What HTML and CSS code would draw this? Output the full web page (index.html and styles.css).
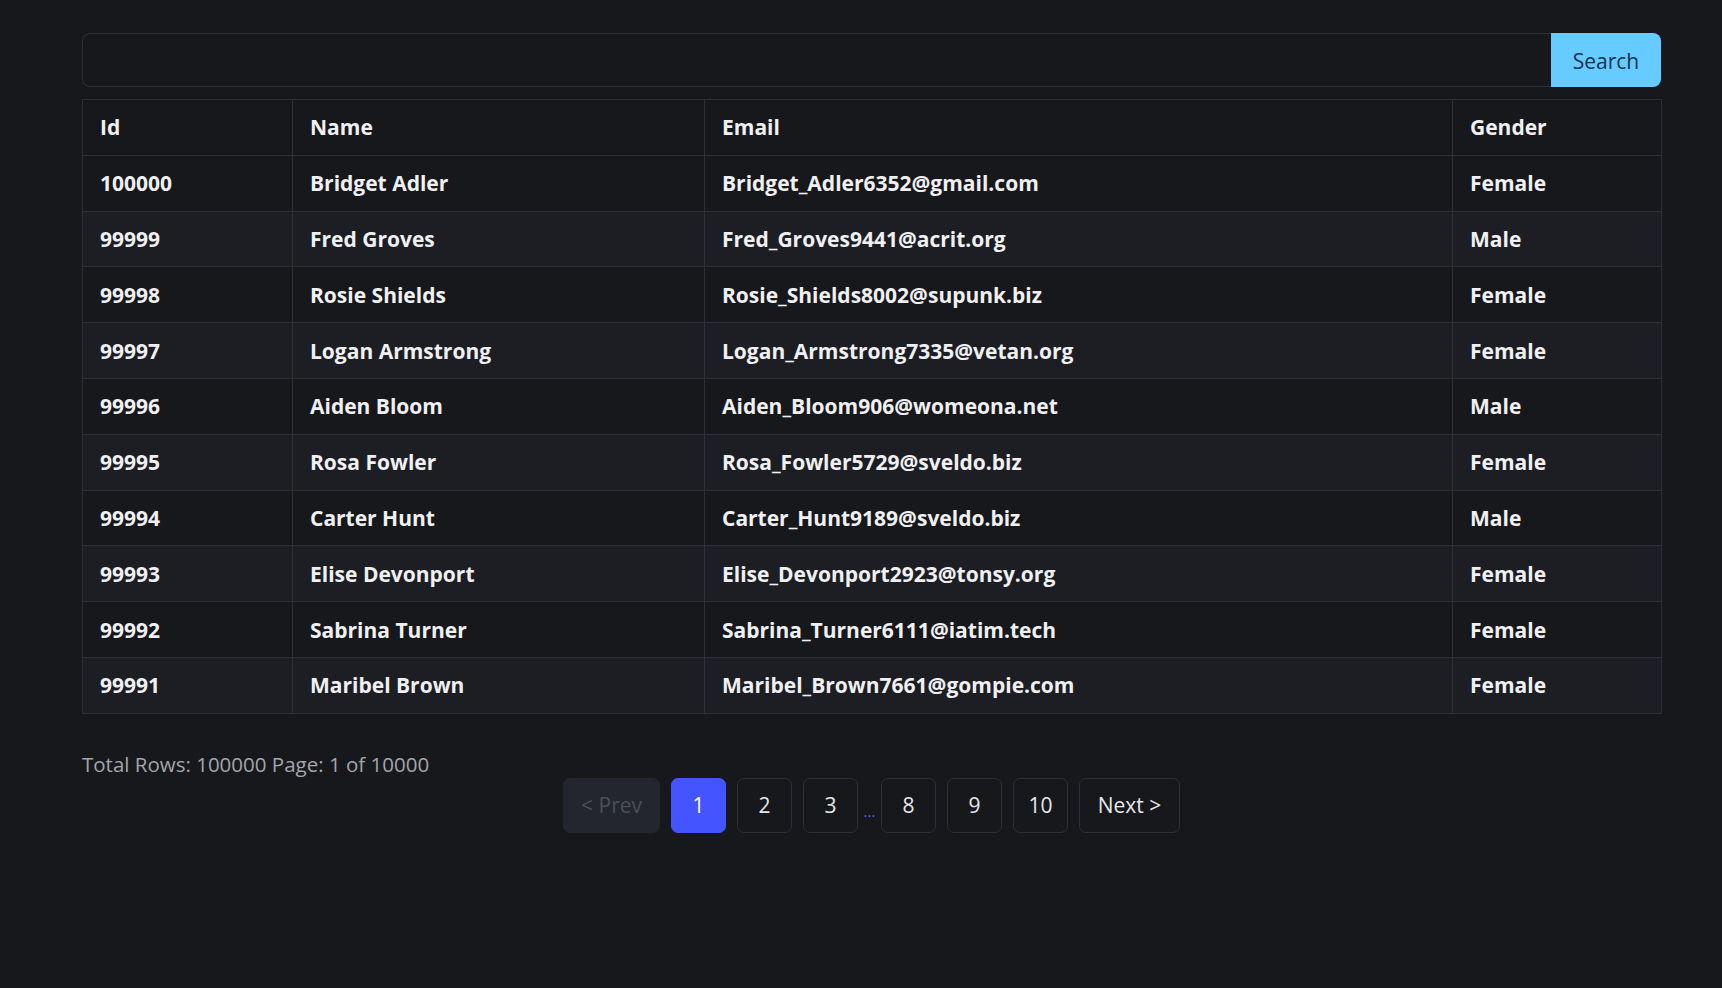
FILE: index.html
```html
<!DOCTYPE html>
<html>
<head>
<meta charset="utf-8">
<link rel="stylesheet" href="styles.css">
</head>
<body>
<div class="container">
  <form class="search">
    <input class="search-input" type="text">
    <button class="search-btn" type="button">Search</button>
  </form>
  <table class="grid">
    <colgroup>
      <col class="c-id"><col class="c-name"><col class="c-email"><col class="c-gender">
    </colgroup>
    <thead>
      <tr><th>Id</th><th>Name</th><th>Email</th><th>Gender</th></tr>
    </thead>
    <tbody>
      <tr><td>100000</td><td>Bridget Adler</td><td>Bridget_Adler6352@gmail.com</td><td>Female</td></tr>
      <tr><td>99999</td><td>Fred Groves</td><td>Fred_Groves9441@acrit.org</td><td>Male</td></tr>
      <tr><td>99998</td><td>Rosie Shields</td><td>Rosie_Shields8002@supunk.biz</td><td>Female</td></tr>
      <tr><td>99997</td><td>Logan Armstrong</td><td>Logan_Armstrong7335@vetan.org</td><td>Female</td></tr>
      <tr><td>99996</td><td>Aiden Bloom</td><td>Aiden_Bloom906@womeona.net</td><td>Male</td></tr>
      <tr><td>99995</td><td>Rosa Fowler</td><td>Rosa_Fowler5729@sveldo.biz</td><td>Female</td></tr>
      <tr><td>99994</td><td>Carter Hunt</td><td>Carter_Hunt9189@sveldo.biz</td><td>Male</td></tr>
      <tr><td>99993</td><td>Elise Devonport</td><td>Elise_Devonport2923@tonsy.org</td><td>Female</td></tr>
      <tr><td>99992</td><td>Sabrina Turner</td><td>Sabrina_Turner6111@iatim.tech</td><td>Female</td></tr>
      <tr><td>99991</td><td>Maribel Brown</td><td>Maribel_Brown7661@gompie.com</td><td>Female</td></tr>
    </tbody>
  </table>
  <div class="summary">Total Rows: 100000 Page: 1 of 10000</div>
  <nav class="pager">
    <button class="pg pg-prev pg-disabled" type="button">&lt; Prev</button>
    <button class="pg pg-active" type="button">1</button>
    <button class="pg" type="button">2</button>
    <button class="pg" type="button">3</button>
    <span class="dots">...</span>
    <button class="pg" type="button">8</button>
    <button class="pg" type="button">9</button>
    <button class="pg" type="button">10</button>
    <button class="pg pg-next" type="button">Next &gt;</button>
  </nav>
</div>
</body>
</html>
```
FILE: styles.css
```css
html, body {
  margin: 0;
  padding: 0;
  background: #17181c;
  color: #ececee;
  font-family: "Open Sans", "Noto Sans", sans-serif;
}

.container {
  width: 1579px;
  margin-left: 82px;
  padding-top: 33px;
}

.search {
  display: flex;
  height: 54px;
  margin: 0;
}

.search-input {
  flex: 1;
  height: 54px;
  box-sizing: border-box;
  background: #17181c;
  border: 1px solid #2e3038;
  border-right: none;
  border-radius: 8px 0 0 8px;
  outline: none;
  color: #ececee;
}

.search-btn {
  width: 110px;
  height: 54px;
  border: none;
  border-radius: 0 8px 8px 0;
  background: #66ccff;
  color: #0d3350;
  font-family: "Open Sans", "Noto Sans", sans-serif;
  font-size: 21px;
  padding: 2px 0 0;
}

.grid {
  width: 1579px;
  margin-top: 12px;
  border-collapse: collapse;
  table-layout: fixed;
  border: 1px solid #2e3038;
}

.c-id { width: 210px; }
.c-name { width: 412px; }
.c-email { width: 748px; }
.c-gender { width: 209px; }

.grid th,
.grid td {
  height: 55.8px;
  box-sizing: border-box;
  padding: 0 17px;
  border: 1px solid #2e3038;
  text-align: left;
  font-size: 21px;
  font-weight: 700;
  color: #f0f0f2;
  white-space: nowrap;
}

.grid tbody tr:nth-child(even) td {
  background: #1c1e24;
}

.summary {
  margin-top: 36px;
  font-size: 20.5px;
  line-height: 28px;
  color: #a3a5ab;
}

.pager {
  display: flex;
  justify-content: center;
  align-items: center;
}

.pg {
  width: 55px;
  height: 55px;
  margin: 0 5.5px;
  padding: 0;
  box-sizing: border-box;
  background: transparent;
  border: 1px solid #2e3038;
  border-radius: 7px;
  color: #e6e7ea;
  font-family: "Open Sans", "Noto Sans", sans-serif;
  font-size: 21px;
}

.pg-prev { width: 97px; }
.pg-next { width: 101px; }

.pg-active {
  background: #4455ff;
  border-color: #4455ff;
  color: #ffffff;
}

.pg-disabled {
  background: #23262e;
  border-color: #23262e;
  color: #4b4f5a;
}

.dots {
  color: #5566ee;
  font-size: 15px;
  align-self: flex-end;
  margin-bottom: 12px;
}
```
